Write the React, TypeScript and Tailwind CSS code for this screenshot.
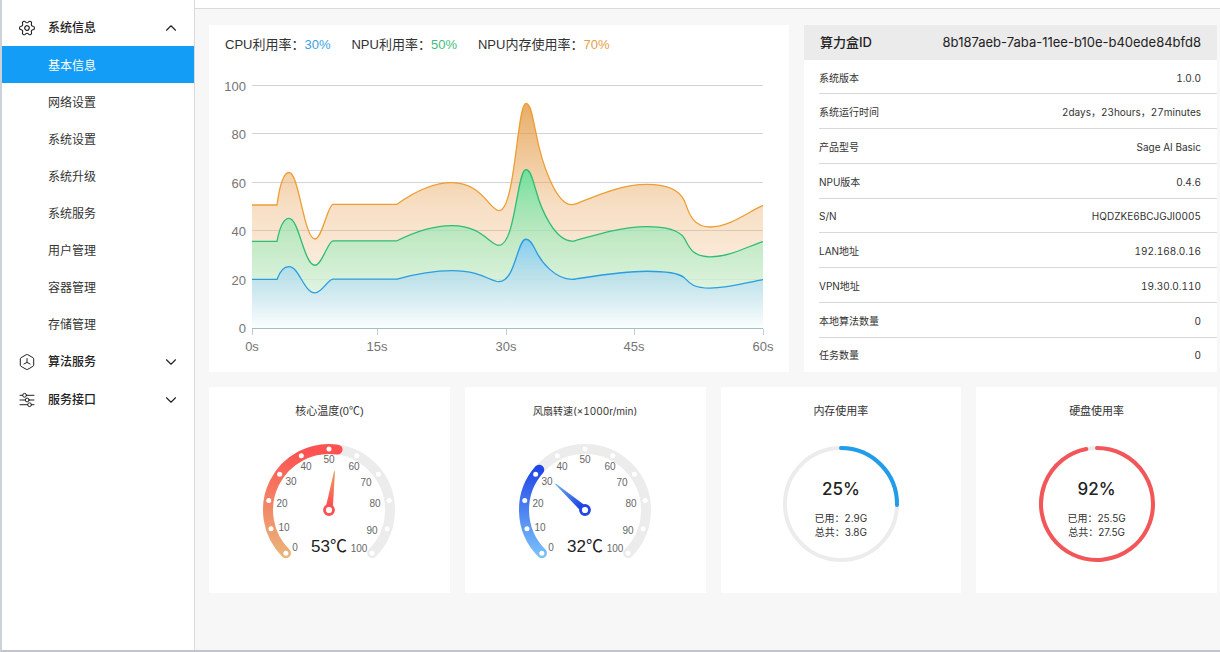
import { useState } from "react";
import { ChevronDown, ChevronUp, Settings } from "lucide-react";

const menu = [
  {
    key: "system",
    label: "系统信息",
    items: [
      "基本信息",
      "网络设置",
      "系统设置",
      "系统升级",
      "系统服务",
      "用户管理",
      "容器管理",
      "存储管理",
    ],
  },
  { key: "algorithm", label: "算法服务", items: [] },
  { key: "api", label: "服务接口", items: [] },
];

const info = [
  ["系统版本", "1.0.0"],
  ["系统运行时间", "2days，23hours，27minutes"],
  ["产品型号", "Sage AI Basic"],
  ["NPU版本", "0.4.6"],
  ["S/N", "HQDZKE6BCJGJI0005"],
  ["LAN地址", "192.168.0.16"],
  ["VPN地址", "19.30.0.110"],
  ["本地算法数量", "0"],
  ["任务数量", "0"],
];

function MenuIcon({ name }: { name: string }) {
  if (name === "system") {
    return <Settings className="size-[18px] rotate-30" strokeWidth={1.5} />;
  }
  if (name === "algorithm") {
    return (
      <svg viewBox="-1 -1 18 18" className="size-[18px]" fill="none" stroke="currentColor" strokeLinejoin="round">
        <path d="M7.2 0.7a1.6 1.6 0 0 1 1.6 0l5.200 3a1.4 1.4 0 0 1 .7 1.2v6.2a1.4 1.4 0 0 1-.7 1.2l-5.200 3a1.6 1.6 0 0 1-1.6 0l-5.200-3a1.4 1.4 0 0 1-.7-1.2V4.900a1.400 1.400 0 0 1 .7-1.200z" />
        <path d="M8 4.600V8.400L4.900 10M8 8.400L11.100 10" strokeLinecap="round" />
      </svg>
    );
  }
  return (
    <svg viewBox="-1 -1 18 18" className="size-[18px]" fill="none" stroke="currentColor" strokeLinecap="round">
      <path d="M1 3.300H3.600M7.600 3.300H15M1 8H6.200M10.200 8H15M1 12.700H8.600M12.600 12.700H15" />
      <circle cx="5.600" cy="3.300" r="1.900" />
      <circle cx="8.200" cy="8" r="1.900" />
      <circle cx="10.600" cy="12.700" r="1.900" />
    </svg>
  );
}

function Sidebar() {
  const [open, setOpen] = useState("system");
  const [active, setActive] = useState("基本信息");

  return (
    <nav className="flex w-[193px] shrink-0 flex-col gap-px border-r border-[#d9d9d9] bg-white pt-[9px] text-[#333]">
      {menu.map((group) => (
        <div key={group.key}>
          <button
            type="button"
            onClick={() => setOpen(open === group.key ? "" : group.key)}
            className="flex h-[37px] w-full items-center pr-[14px] pl-4 text-left text-xs font-medium text-[#222]"
          >
            <MenuIcon name={group.key} />
            <span className="ml-3 flex-1">{group.label}</span>
            {open === group.key ? (
              <ChevronUp className="size-[18px]" strokeWidth={1.5} />
            ) : (
              <ChevronDown className="size-[18px]" strokeWidth={1.5} />
            )}
          </button>
          {open === group.key &&
            group.items.map((item) => (
              <a
                key={item}
                href="#"
                onClick={() => setActive(item)}
                className={
                  item === active
                    ? "flex h-[37px] items-center bg-[#149df6] pt-0.5 pl-[46px] text-xs text-white"
                    : "flex h-[37px] items-center pt-0.5 pl-[46px] text-xs"
                }
              >
                {item}
              </a>
            ))}
        </div>
      ))}
    </nav>
  );
}

// [x, height] pairs in plot units, three pairs for each curve segment
const curve: number[][] = [
  [0, 123, 12, 123, 25, 123],
  [28, 145, 32, 155.5, 37, 155.5],
  [47, 155.5, 52, 89, 63, 89],
  [70, 89, 76, 123.7, 81, 123.7],
  [100, 123.7, 125, 123.7, 145, 123.7],
  [160, 134.5, 180, 145.3, 200, 145.3],
  [230, 145.3, 238, 117.3, 247, 117.3],
  [263.5, 117.3, 265, 224.7, 274, 224.7],
  [279, 224.7, 281, 208, 284, 195],
  [289, 168, 303, 123.3, 320, 123.3],
  [322, 123.3, 323, 123.8, 324, 124.2],
  [346, 133, 370, 143.7, 395, 143.7],
  [414, 143.7, 427, 138, 432, 128],
  [436, 120, 438, 101, 458, 101],
  [478, 101, 496, 116, 511, 122.6],
];

const series = [
  {
    id: "mem",
    scale: 1,
    stroke: "#ed9d33",
    stops: ["rgba(227,152,63,0.8)", "rgba(232,165,90,0.36)", "rgba(255,245,235,0.4)"],
  },
  {
    id: "npu",
    scale: 0.705,
    stroke: "#2fbd76",
    stops: ["rgba(91,227,154,0.85)", "rgba(158,235,188,0.6)", "rgba(245,252,247,0.7)"],
  },
  {
    id: "cpu",
    scale: 0.395,
    stroke: "#2a9de0",
    stops: ["rgba(127,202,245,0.9)", "rgba(184,222,240,0.75)", "rgba(252,254,254,0.9)"],
  },
];

const ticks = [
  { x: 43, label: "0s" },
  { x: 168, label: "15s" },
  { x: 297, label: "30s" },
  { x: 425, label: "45s" },
  { x: 554, label: "60s" },
];

function linePath(scale: number) {
  const y = (h: number) => 274 - h * scale;
  return curve.reduce(
    (d, [a, b, c, e, f, g]) =>
      `${d} C${43 + a},${y(b)} ${43 + c},${y(e)} ${43 + f},${y(g)}`,
    `M43,${y(123)}`
  );
}

function UsageChart() {
  return (
    <svg viewBox="0 0 580 318" className="block w-full" role="img" aria-label="利用率">
      <defs>
        {series.map((s) => (
          <linearGradient key={s.id} id={s.id} x1="0" y1="0" x2="0" y2="1">
            <stop offset="0" stopColor={s.stops[0]} />
            <stop offset="0.45" stopColor={s.stops[1]} />
            <stop offset="1" stopColor={s.stops[2]} />
          </linearGradient>
        ))}
      </defs>
      {[0, 20, 40, 60, 80, 100].map((v) => {
        const y = Math.round(274 - v * 2.42) - 0.5;
        return (
          <g key={v}>
            <line x1="43" x2="554" y1={y} y2={y} stroke="#d3d4d6" />
            <text x="37" y={y + 5} textAnchor="end" fontSize="13" fill="#757575" className="font-['Liberation_Sans',sans-serif]">
              {v}
            </text>
          </g>
        );
      })}
      {series.map((s) => (
        <g key={s.id}>
          <path d={`${linePath(s.scale)} V274 H43 Z`} fill={`url(#${s.id})`} />
          <path d={linePath(s.scale)} fill="none" stroke={s.stroke} strokeWidth="1.3" />
        </g>
      ))}
      <line x1="43" x2="554" y1="274.5" y2="274.5" stroke="#9fc3bb" />
      {ticks.map(({ x, label }) => (
        <g key={label}>
          <line x1={x + 0.5} x2={x + 0.5} y1="275" y2="281" stroke="#c9cccf" />
          <text x={x} y="297" textAnchor="middle" fontSize="13" fill="#757575" className="font-['Liberation_Sans',sans-serif]">
            {label}
          </text>
        </g>
      ))}
    </svg>
  );
}

function polar(r: number, deg: number) {
  const rad = (deg * Math.PI) / 180;
  return [70 + r * Math.sin(rad), 70 - r * Math.cos(rad)];
}

function arc(r: number, from: number, to: number) {
  const [x1, y1] = polar(r, from);
  const [x2, y2] = polar(r, to);
  return `M${x1},${y1} A${r},${r} 0 ${to - from > 180 ? 1 : 0} 1 ${x2},${y2}`;
}

const tickLabels = [
  [0, 36, 108],
  [10, 25, 88],
  [20, 23, 64],
  [30, 32, 42],
  [40, 47, 27],
  [50, 70, 20],
  [60, 95, 27],
  [70, 107, 43],
  [80, 116, 64],
  [90, 113, 91],
  [100, 100, 109],
];

type GaugeProps = {
  id: string;
  title: string;
  titleClass: string;
  value: number;
  low: string;
  high: string;
  tip: string;
};

function GaugeCard({ id, title, titleClass, value, low, high, tip }: GaugeProps) {
  const angle = -135 + value * 2.7;
  const top = polar(61, Math.min(angle, 0))[1];

  return (
    <section className="flex flex-col items-center bg-white pt-[15px] pb-[13px]">
      <h2 className={titleClass}>{title}</h2>
      <svg viewBox="0 0 140 140" className="mt-5 size-[140px]" role="img" aria-label={title}>
        <defs>
          <linearGradient id={`${id}-arc`} gradientUnits="userSpaceOnUse" x1="20" y1="118" x2="30" y2={top}>
            <stop offset="0" stopColor={low} />
            <stop offset="1" stopColor={high} />
          </linearGradient>
          <linearGradient id={`${id}-needle`} gradientUnits="userSpaceOnUse" x1="70" y1="64" x2="70" y2="30">
            <stop offset="0" stopColor={high} />
            <stop offset="1" stopColor={tip} />
          </linearGradient>
        </defs>
        <path d={arc(61, -135, 135)} fill="none" stroke="#ececec" strokeWidth="10" strokeLinecap="round" />
        <path d={arc(61, -135, angle)} fill="none" stroke={`url(#${id}-arc)`} strokeWidth="10" strokeLinecap="round" />
        {tickLabels.map(([label, x, y]) => {
          const [cx, cy] = polar(61, -135 + label * 2.7);
          return (
            <g key={label}>
              <circle cx={cx} cy={cy} r="2.5" fill="#fff" />
              <text x={x} y={y + 3} textAnchor="middle" fontSize="10" fill="#666" className="font-['Liberation_Sans',sans-serif]">
                {label}
              </text>
            </g>
          );
        })}
        <g transform={`rotate(${angle} 70 70)`}>
          <path d="M66.500 67L69.500 31Q70 30 70.500 31L73.500 67Z" fill={`url(#${id}-needle)`} />
        </g>
        <circle cx="70" cy="70" r="4.500" fill="#fff" stroke={high} strokeWidth="2.800" />
        <text x="70" y="112" textAnchor="middle" fontSize="17" fill="#222" className="font-['Liberation_Sans','Noto_Sans_CJK_SC',sans-serif]">
          {value}℃
        </text>
      </svg>
    </section>
  );
}

type RingProps = {
  title: string;
  percent: number;
  sweep: number;
  color: string;
  used: string;
  total: string;
};

function RingCard({ title, percent, sweep, color, used, total }: RingProps) {
  return (
    <section className="flex flex-col items-center bg-white pt-[15px] pb-[13px]">
      <h2 className="text-[11px] leading-[18px]">{title}</h2>
      <div className="mt-[14px] grid place-items-center *:col-start-1 *:row-start-1">
        <svg viewBox="0 0 140 140" className="size-[140px]" aria-hidden="true">
          <circle cx="70" cy="70" r="56" fill="none" stroke="#ececec" strokeWidth="4" />
          <path d={arc(56, 0, sweep)} fill="none" stroke={color} strokeWidth="4" strokeLinecap="round" />
        </svg>
        <div className="pt-2 text-center">
          <p className="mb-2.5 text-[17px] leading-6 font-medium text-[#222]">{percent}%</p>
          <p className="text-[10px] leading-[14px]">已用：{used}</p>
          <p className="text-[10px] leading-[14px]">总共：{total}</p>
        </div>
      </div>
    </section>
  );
}

export default function App() {
  return (
    <div className="flex min-h-screen border-b-2 border-l-2 border-b-[#c3c3cd] border-l-[#cdd2d9] bg-[#f7f7f7] font-['Inter','Noto_Sans_CJK_SC',sans-serif] text-[#333]">
      <Sidebar />
      <div className="min-w-0 flex-1">
        <header className="h-[9px] border-b border-[#d9d9d9] bg-white" />
        <main className="flex flex-col gap-[15px] pt-4 pr-[3px] pl-[14px]">
          <div className="grid grid-cols-[580fr_413fr] gap-[15px]">
            <section className="bg-white pt-[11px]">
              <div className="flex gap-[21px] pl-4 font-['Liberation_Sans','Noto_Sans_CJK_SC',sans-serif] text-[13px] leading-[18px]">
                <p>
                  CPU利用率：<span className="text-[#3d9fe3]">30%</span>
                </p>
                <p>
                  NPU利用率：<span className="text-[#3fbd80]">50%</span>
                </p>
                <p>
                  NPU内存使用率：<span className="text-[#e5a048]">70%</span>
                </p>
              </div>
              <UsageChart />
            </section>

            <section className="flex flex-col bg-white pb-px">
              <div className="flex h-[35px] items-center justify-between bg-[#ebebeb] px-4 text-[13px] text-[#222]">
                <h2 className="font-medium">算力盒ID</h2>
                <span>8b187aeb-7aba-11ee-b10e-b40ede84bfd8</span>
              </div>
              <div className="flex-1 pl-[15px]">
                <table className="h-full w-full text-[10px] tabular-nums">
                  <tbody>
                    {info.map(([label, value]) => (
                      <tr key={label} className="border-b border-[#d9d9d9] last:border-b-0">
                        <th scope="row" className="pt-[3px] text-left font-normal">
                          {label}
                        </th>
                        <td className="pt-[3px] pr-4 text-right">{value}</td>
                      </tr>
                    ))}
                  </tbody>
                </table>
              </div>
            </section>
          </div>

          <div className="grid grid-cols-4 gap-[15px]">
            <GaugeCard
              id="temp"
              title="核心温度(0℃)"
              titleClass="font-['Liberation_Sans','Noto_Sans_CJK_SC',sans-serif] text-[11px] leading-[18px]"
              value={53}
              low="#e9b679"
              high="#fd5152"
              tip="#e8a560"
            />
            <GaugeCard
              id="fan"
              title="风扇转速(×1000r/min)"
              titleClass="text-[10px] leading-[18px] tabular-nums"
              value={32}
              low="#7cc4fc"
              high="#2146e6"
              tip="#6fb4e6"
            />
            <RingCard title="内存使用率" percent={25} sweep={91} color="#1f9cea" used="2.9G" total="3.8G" />
            <RingCard title="硬盘使用率" percent={92} sweep={349} color="#f35658" used="25.5G" total="27.5G" />
          </div>
        </main>
      </div>
    </div>
  );
}
